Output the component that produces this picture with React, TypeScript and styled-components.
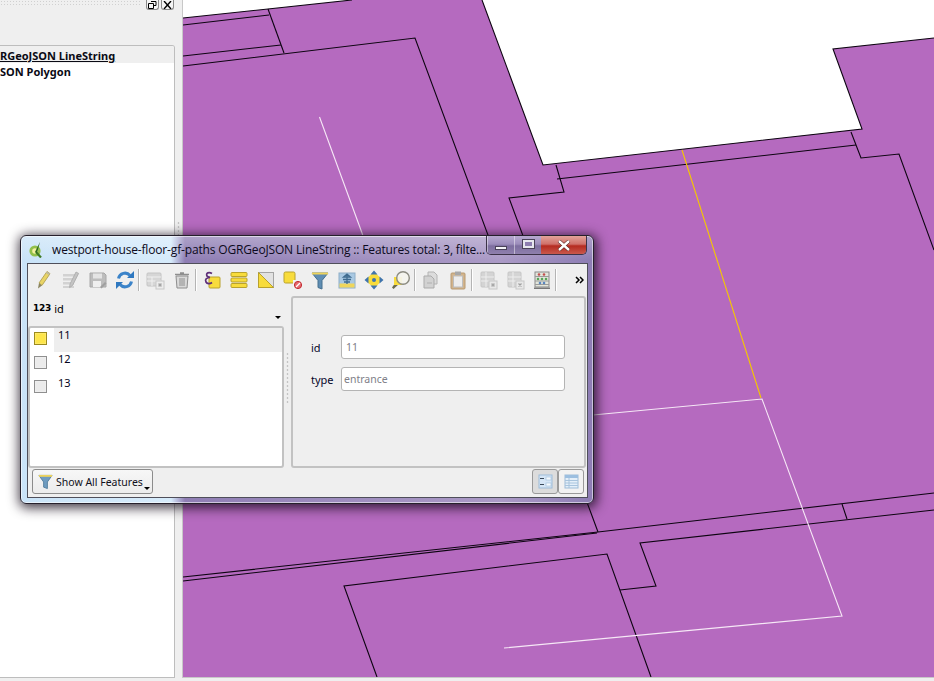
import React from 'react';
import styled, { createGlobalStyle } from 'styled-components';

const GlobalStyle = createGlobalStyle`
    html, body {
        margin: 0;
        padding: 0;
        background: #efefef;
    }
    body {
        font-family: "Noto Sans", "Open Sans", sans-serif;
        font-size: 11px;
        color: #000;
    }
`;

const Page = styled.div`
    position: relative;
    display: flex;
    width: 934px;
    height: 681px;
    overflow: hidden;
    background: #efefef;
`;

const Dock = styled.div`
    display: flex;
    flex-direction: column;
    width: 175px;
    height: 678px;
`;

const DockHeader = styled.div`
    display: flex;
    justify-content: flex-end;
    gap: 2px;
    height: 36px;
    padding-right: 1px;
    margin-bottom: 9px;
`;

const DockGrip = styled.div`
    flex: 1;
    height: 7px;
    margin-right: 2px;
    background-image: radial-gradient(#d0d0d0 0.8px, transparent 1px);
    background-size: 3px 3px;
`;

const DockButton = styled.button`
    display: flex;
    align-items: center;
    justify-content: center;
    width: 13px;
    height: 10px;
    padding: 0;
    border: 1px solid #8a8a8a;
    border-top: 0;
    border-radius: 0 0 3px 3px;
    background: #f4f4f4;
`;

const LayerList = styled.div`
    flex: 1;
    overflow: hidden;
    border: 1px solid #bdbdbd;
    border-left: 0;
    border-radius: 0 3px 0 0;
    background: #fff;
`;

const LayerRow = styled.div<{ $active?: boolean }>`
    height: ${(p) => (p.$active ? '15px' : '16px')};
    padding-top: ${(p) => (p.$active ? '2px' : '1px')};
    line-height: ${(p) => (p.$active ? '16px' : '15px')};
    white-space: nowrap;
    font-family: "Noto Sans", sans-serif;
    font-size: 11px;
    font-weight: 700;
    color: #0a0a14;
    background: ${(p) => (p.$active ? '#efefef' : '#fff')};
    text-decoration: ${(p) => (p.$active ? 'underline' : 'none')};
`;

const Splitter = styled.div`
    display: flex;
    flex-direction: column;
    align-items: center;
    width: 7px;
    height: 677px;
    padding-top: 221px;
    box-sizing: border-box;
`;

const SplitterGrip = styled.div<{ $h: number }>`
    width: 3px;
    height: ${(p) => p.$h}px;
    background-image: radial-gradient(#c4c4c4 0.9px, transparent 1.1px);
    background-size: 3px 4px;
`;

const MapFrame = styled.div`
    width: 752px;
    height: 678px;
    box-sizing: border-box;
    border-left: 1px solid #c8c8c8;
    border-bottom: 1px solid #c8c8c8;
    background: #fff;
    svg {
        display: block;
    }
`;

/* Floating window: its place on the desktop is the content */
const Window = styled.div`
    position: absolute;
    left: 20px;
    top: 235px;
    display: flex;
    flex-direction: column;
    width: 574px;
    height: 269px;
    box-sizing: border-box;
    border: 1px solid #26202c;
    border-radius: 6px;
    background:
        linear-gradient(180deg, rgba(255, 255, 255, 0.28) 0, rgba(255, 255, 255, 0) 24px),
        linear-gradient(90deg, #c9e3f8 0, #d6ebfb 150px, #8f7eb4 164px, #a08fc0 350px, #ab9ac6 480px, #8d7db4 100%);
    box-shadow:
        inset 0 0 0 1px rgba(255, 255, 255, 0.55),
        1px 2px 12px 2px rgba(20, 10, 25, 0.8);
`;

const TitleBar = styled.div`
    display: flex;
    align-items: flex-start;
    height: 27px;
    padding-left: 8px;
    flex-shrink: 0;
`;

const TitleIcon = styled.div`
    width: 14px;
    height: 16px;
    margin-top: 6px;
`;

const TitleText = styled.div`
    flex: 1;
    margin: 5px 0 0 9px;
    font-family: "Open Sans", sans-serif;
    font-size: 12px;
    line-height: 17px;
    letter-spacing: -0.16px;
    white-space: nowrap;
    color: #0b0a20;
`;

const CaptionButtons = styled.div`
    display: flex;
    height: 18px;
    margin-right: 6px;
    border: 1px solid #3c3348;
    border-top: 0;
    border-radius: 0 0 5px 5px;
    overflow: hidden;
`;

const CaptionButton = styled.div<{ $close?: boolean }>`
    display: flex;
    align-items: center;
    justify-content: center;
    width: ${(p) => (p.$close ? '45px' : '26px')};
    border-left: ${(p) => (p.$close ? '0' : '1px solid rgba(255, 255, 255, 0.45)')};
    background: ${(p) =>
        p.$close
            ? 'linear-gradient(180deg, #e2a49a 0, #d0706a 45%, #b52b20 55%, #c9594c 100%)'
            : 'linear-gradient(180deg, #b7a9d0 0, #9c8dbb 45%, #7d6e9f 55%, #8f80ad 100%)'};
`;

const MinGlyph = styled.div`
    width: 10px;
    height: 2px;
    margin-top: 6px;
    border: 1px solid #4a4258;
    background: #f2f2f6;
`;

const MaxGlyph = styled.div`
    width: 7px;
    height: 4px;
    margin-top: -3px;
    border: 2px solid #e6e6ee;
    outline: 1px solid #4a4258;
    background: #8d7db0;
`;

const Client = styled.div`
    display: flex;
    flex-direction: column;
    flex: 1;
    margin: 0 5px 5px 6px;
    border: 1px solid #4f4f5a;
    background: #efefef;
`;

const Toolbar = styled.div`
    display: flex;
    align-items: center;
    flex-shrink: 0;
    height: 32px;
    padding-left: 2px;
    box-sizing: border-box;
`;

const ToolButton = styled.div`
    display: flex;
    align-items: center;
    justify-content: center;
    width: 27px;
    height: 22px;
    flex-shrink: 0;
`;

const ToolSeparator = styled.div`
    width: 1px;
    height: 22px;
    margin-right: 1px;
    border-right: 1px solid #fff;
    background: #b4b4b4;
    flex-shrink: 0;
`;

const Overflow = styled.div`
    display: flex;
    margin-left: 17px;
`;

const Body = styled.div`
    display: flex;
    height: 172px;
    flex-shrink: 0;
`;

const FeaturesColumn = styled.div`
    display: flex;
    flex-direction: column;
    width: 256px;
`;

const FieldCombo = styled.div`
    position: relative;
    display: flex;
    align-items: flex-start;
    height: 30px;
    padding: 5px 0 0 5px;
    box-sizing: border-box;
`;

const FieldType = styled.span`
    font-family: "DejaVu Sans", sans-serif;
    font-size: 9px;
    font-weight: 700;
    line-height: 14px;
    letter-spacing: -0.2px;
`;

const FieldName = styled.span`
    margin-left: 3px;
    line-height: 15px;
`;

const ComboArrow = styled.div`
    position: absolute;
    right: 3px;
    bottom: 7px;
    width: 0;
    height: 0;
    border-left: 3px solid transparent;
    border-right: 3px solid transparent;
    border-top: 3px solid #000;
`;

const FeatureList = styled.div`
    flex: 1;
    border: 2px solid #c2c2c2;
    border-radius: 3px;
    background: #fff;
`;

const FeatureRow = styled.div`
    display: flex;
    height: 24px;
`;

const SwatchCell = styled.div`
    width: 24px;
    padding: 4px 0 0 4px;
    box-sizing: border-box;
`;

const Swatch = styled.div<{ $selected?: boolean }>`
    width: 11px;
    height: 11px;
    border: 1px solid ${(p) => (p.$selected ? '#9c8a1e' : '#8f8f8f')};
    box-shadow: inset 0 0 0 0.5px rgba(255, 255, 255, 0.3);
    background: ${(p) => (p.$selected ? '#fde54a' : '#ebebeb')};
`;

const FeatureLabel = styled.div<{ $active?: boolean }>`
    flex: 1;
    padding-left: 4px;
    line-height: 13px;
    color: #04041c;
    background: ${(p) => (p.$active ? '#eeeeee' : '#fff')};
`;

const MiddleGrip = styled.div`
    display: flex;
    justify-content: center;
    width: 7px;
    padding-top: 56px;
    box-sizing: border-box;
`;

const FormPanel = styled.div`
    flex: 1;
    margin-right: 1px;
    padding: 37px 19px 0 18px;
    box-sizing: border-box;
    border: 2px solid #c2c2c2;
    border-radius: 3px;
    display: grid;
    grid-template-columns: 30px 1fr;
    grid-auto-rows: 24px;
    row-gap: 8px;
    align-items: center;
`;

const FieldLabel = styled.label`
    color: #06062a;
    font-size: 11px;
`;

const FieldInput = styled.div<{ $inset?: number }>`
    height: 24px;
    box-sizing: border-box;
    padding-left: ${(p) => p.$inset ?? 2}px;
    border: 1px solid #b4b4b4;
    border-radius: 3px;
    background: #fff;
    line-height: 23px;
    color: #808088;
    font-size: 10.5px;
`;

const Footer = styled.div`
    display: flex;
    justify-content: space-between;
    padding: 1px 3px 0 4px;
`;

const ShowAllButton = styled.button`
    position: relative;
    display: flex;
    align-items: center;
    gap: 3px;
    width: 121px;
    height: 25px;
    padding: 0 0 0 5px;
    border: 1px solid #8c8c8c;
    border-radius: 3px;
    background: linear-gradient(180deg, #f7f7f7, #ececec);
    font-family: inherit;
    font-size: 10.5px;
    color: #101020;
`;

const ButtonArrow = styled.span`
    position: absolute;
    right: 2px;
    bottom: 3px;
    width: 0;
    height: 0;
    border-left: 3px solid transparent;
    border-right: 3px solid transparent;
    border-top: 3px solid #000;
`;

const ViewButtons = styled.div`
    display: flex;
`;

const ViewButton = styled.div<{ $checked?: boolean }>`
    display: flex;
    align-items: center;
    justify-content: center;
    width: 26px;
    height: 25px;
    box-sizing: border-box;
    border: 1px solid #9a9a9a;
    border-radius: 3px;
    background: ${(p) => (p.$checked ? '#dcdcdc' : '#f2f2f2')};
`;

const Svg = ({ children, size = 20 }: { children: React.ReactNode; size?: number }) => (
    <svg width={size} height={size} viewBox="0 0 20 20">{children}</svg>
);

const GreyTable = ({ badge }: { badge: 'star' | 'x' }) => (
    <Svg>
        <rect x="3" y="2" width="13" height="15" rx="1" fill="#d4d4d4" stroke="#c6c6c6" />
        <path d="M3 7h13M3 11h13M8 2v15" stroke="#eee" fill="none" />
        <rect x="11" y="11" width="8" height="8" fill="#e8e8e8" stroke="#c8c8c8" />
        {badge === 'star'
            ? <path d="M15 13v4M13 15h4M13.6 13.6l2.8 2.8M16.4 13.6l-2.8 2.8" stroke="#a8a8a8" />
            : <path d="M13.5 13.5l3 3M16.5 13.5l-3 3" stroke="#a0a0a0" strokeWidth="1.2" />}
    </Svg>
);

const tools: (React.ReactNode | 'sep')[] = [
    <Svg key="pencil">
        <path d="M5 13L13 1.5l3 2.2L8 15.4z" fill="#e9d465" stroke="#b7a75a" />
        <path d="M13 1.5l3 2.2-1 1.4-3-2.2z" fill="#bcb9a4" />
        <path d="M5 13l3 2.4-4 3z" fill="#8a8460" />
    </Svg>,
    <Svg key="multi-edit">
        <path d="M2 4h13v2.5H2zM2 8h12v2.5H2zM2 12h11v2.5H2zM2 16h11v2H2z" fill="#d2d2d2" />
        <path d="M9 14l6-12 2.6 1.4-6 12-3 2.2z" fill="#c4c4c4" stroke="#a8a8a8" strokeWidth="0.8" />
    </Svg>,
    <Svg key="save">
        <path d="M2 3h14l2 2v12H2z" fill="#bdbdbd" stroke="#a8a8a8" />
        <rect x="5" y="3.5" width="9" height="5" fill="#e4e4e4" />
        <rect x="5" y="11" width="8" height="6" fill="#efefef" />
        <path d="M12 17l5-5 1.5 1.5-5 5z" fill="#a0a0a0" />
    </Svg>,
    <Svg key="refresh">
        <path d="M3.5 8.5A6.6 6.6 0 0 1 15 5.5" fill="none" stroke="#3b83c9" strokeWidth="3" />
        <path d="M12 8h7V1z" fill="#2f78c0" />
        <path d="M16.5 11.5A6.6 6.6 0 0 1 5 14.5" fill="none" stroke="#3b83c9" strokeWidth="3" />
        <path d="M8 12H1v7z" fill="#2f78c0" />
    </Svg>,
    'sep',
    <Svg key="new-attr">
        <rect x="2" y="3" width="14" height="13" rx="1" fill="#d6d6d6" stroke="#c4c4c4" />
        <path d="M2 7h14M2 11h14M7 7v9" stroke="#f0f0f0" fill="none" />
        <rect x="11" y="11" width="8" height="8" fill="#ececec" stroke="#c8c8c8" />
        <path d="M15 13v4M13 15h4M13.6 13.6l2.8 2.8M16.4 13.6l-2.8 2.8" stroke="#a4a4a4" />
    </Svg>,
    <Svg key="trash">
        <path d="M4 6h12l-1 12H5z" fill="#d9d9d9" stroke="#8e8e8e" />
        <path d="M3 4.5h14M8 3h4" stroke="#8e8e8e" strokeWidth="1.6" fill="none" />
        <path d="M8 8v8M10 8v8M12 8v8" stroke="#8e8e8e" fill="none" />
    </Svg>,
    'sep',
    <Svg key="expression">
        <rect x="7" y="7" width="11" height="11" rx="1" fill="#f8dc3c" stroke="#b9a22c" />
        <path d="M10 3.5C7 1.5 3.5 3 5 6c.4.8 1.5 1.2 3 1.3C5 7.5 2.5 9 4 12c1 2 4 2 6 .5" fill="none" stroke="#5e2f78" strokeWidth="1.7" />
    </Svg>,
    <Svg key="select-all">
        <rect x="2" y="2.5" width="16" height="4" rx="1" fill="#f8dc3c" stroke="#b9a22c" />
        <rect x="2" y="8" width="16" height="4" rx="1" fill="#f8dc3c" stroke="#b9a22c" />
        <rect x="2" y="13.5" width="16" height="4" rx="1" fill="#f8dc3c" stroke="#b9a22c" />
    </Svg>,
    <Svg key="invert">
        <rect x="2.5" y="2.5" width="15" height="15" fill="#e2e2e2" stroke="#a4a4a4" />
        <path d="M2.5 2.5v15h15z" fill="#f8dc3c" stroke="#b9a22c" />
    </Svg>,
    <Svg key="deselect">
        <rect x="1" y="2" width="11" height="11" rx="1.5" fill="#f8dc3c" stroke="#b9a22c" />
        <rect x="10" y="10" width="9" height="9" fill="#f3f3f3" />
        <circle cx="15" cy="15" r="3.6" fill="#e86a70" stroke="#c02a30" />
        <path d="M13 17l4-4" stroke="#fff" strokeWidth="1.2" />
    </Svg>,
    <Svg key="filter">
        <path d="M2 3h16l-6 7.5V19l-4-1.5v-7z" fill="#5f8db3" stroke="#46708f" />
        <path d="M2 2.5h16v2H2z" fill="#eed35a" />
    </Svg>,
    <Svg key="move-top">
        <rect x="2" y="3" width="16" height="15" fill="#a9c9e3" stroke="#8eaec8" />
        <rect x="2.5" y="13.5" width="15" height="4" fill="#f0d65a" />
        <path d="M10 4v10M6.5 7h7L10 4zM6 9.5h8M7 12h6" stroke="#3f6c90" strokeWidth="1.3" fill="none" />
    </Svg>,
    <Svg key="pan-selected">
        <rect x="4" y="4" width="12" height="12" rx="1" fill="#f8dc3c" transform="rotate(45 10 10)" />
        <path d="M10 .5l3.5 4h-7zM10 19.5l3.5-4h-7zM.5 10l4-3.5v7zM19.5 10l-4-3.5v7z" fill="#3f74ad" />
        <circle cx="10" cy="10" r="2" fill="#3f74ad" />
    </Svg>,
    <Svg key="zoom-selected">
        <path d="M5 12l-4 5.5 1.5 1.5L8 14z" fill="#6a6a50" />
        <rect x="3" y="7" width="8" height="8" fill="#f8dc3c" />
        <circle cx="12" cy="8" r="6.3" fill="#f4f4ee" fillOpacity="0.92" stroke="#8b8b80" strokeWidth="1.4" />
    </Svg>,
    'sep',
    <Svg key="copy">
        <path d="M7 2h6l3 3v9H7z" fill="#dcdcdc" stroke="#b4b4b4" />
        <path d="M3 6h7l3 3v9H3z" fill="#d2d2d2" stroke="#ababab" />
        <path d="M6 13h5" stroke="#b0b0b0" />
    </Svg>,
    <Svg key="paste">
        <rect x="3" y="3" width="14" height="16" rx="1" fill="#d2b48c" stroke="#b89a72" />
        <rect x="5.5" y="6" width="9" height="11" fill="#ececec" stroke="#bdbdbd" />
        <rect x="7" y="1.5" width="6" height="3.5" fill="#a8a8a8" />
    </Svg>,
    'sep',
    <GreyTable key="new-col" badge="star" />,
    <GreyTable key="del-col" badge="x" />,
    <Svg key="field-calc">
        <path d="M2 17.5h16v1.5H2z" fill="#777" />
        <rect x="3" y="2" width="14" height="15" fill="#e3e6dc" stroke="#8a8a8a" />
        <path d="M3 6.5h14M3 11h14M3 14.5h14" stroke="#9a9a9a" fill="none" />
        <circle cx="7" cy="4.5" r="1.3" fill="#c44e4e" />
        <circle cx="12" cy="4.5" r="1.3" fill="#c44e4e" />
        <circle cx="6" cy="9" r="1.3" fill="#58a458" />
        <circle cx="10" cy="9" r="1.3" fill="#58a458" />
        <circle cx="14" cy="9" r="1.3" fill="#58a458" />
        <circle cx="8" cy="13" r="1.3" fill="#5b87c0" />
        <circle cx="12" cy="13" r="1.3" fill="#5b87c0" />
    </Svg>,
    'sep',
];

const MapView = () => {
    const black = [
        '183,18 352,0',
        '183,25 269,15',
        '268,9 284,53',
        '183,56 281,45',
        '183,66 415,38 598,532',
        '482,0 543,165 862,129 833,49 934,38',
        '557,179 856,145',
        '556,165 564,192 509,198 580,390',
        '851,132 861,158 899,154 934,250',
        '183,577 598,532 934,493',
        '183,581 597,533',
        '934,510 640,543 656,586 620,590',
        '842,504 847,519',
        '377,677 344,586 607,554 651,677',
    ];
    return (
        <svg width={751} height={677} viewBox="183 0 751 677">
            <rect x="183" y="0" width="751" height="677" fill="#b56abf" />
            <polygon points="482,0 543,165 862,129 833,49 934,38 934,0" fill="#fff" />
            <polygon points="183,0 352,0 183,18" fill="#fff" />
            <g fill="none" stroke="#0c0410" strokeWidth="1.1">
                {black.map((points) => <polyline key={points} points={points} />)}
            </g>
            <g fill="none" stroke="#f6e8f6" strokeWidth="1.1">
                <polyline points="319.5,117 362,233 400,340" />
                <polyline points="540,420 762,399 842,616 504,648" />
            </g>
            <line x1="682" y1="150" x2="761" y2="398" stroke="#f5c800" strokeWidth="1.1" />
        </svg>
    );
};

export default function App() {
    return (
        <Page>
            <GlobalStyle />
            <Dock>
                <DockHeader>
                    <DockGrip />
                    <DockButton>
                        <svg width="9" height="8" viewBox="0 0 9 8">
                            <path d="M3 .5h5v4H6M.5 2.5h5v5h-5z" fill="none" stroke="#000" />
                        </svg>
                    </DockButton>
                    <DockButton>
                        <svg width="9" height="8" viewBox="0 0 9 8">
                            <path d="M1 0l7 8M8 0L1 8" stroke="#000" strokeWidth="1.4" />
                        </svg>
                    </DockButton>
                </DockHeader>
                <LayerList>
                    <LayerRow $active>RGeoJSON LineString</LayerRow>
                    <LayerRow>SON Polygon</LayerRow>
                </LayerList>
            </Dock>
            <Splitter>
                <SplitterGrip $h={14} />
            </Splitter>
            <MapFrame>
                <MapView />
            </MapFrame>

            <Window>
                <TitleBar>
                    <TitleIcon>
                        <svg width="14" height="16" viewBox="0 0 14 16">
                            <circle cx="6" cy="9" r="4.2" fill="#f4f0a0" stroke="#93c04a" strokeWidth="2.8" />
                            <path d="M7 10l5 5.5" stroke="#3f7a24" strokeWidth="2.2" />
                            <path d="M11 0L6 10l2 1z" fill="#2f6a1e" />
                        </svg>
                    </TitleIcon>
                    <TitleText>westport-house-floor-gf-paths OGRGeoJSON LineString :: Features total: 3, filte...</TitleText>
                    <CaptionButtons>
                        <CaptionButton><MinGlyph /></CaptionButton>
                        <CaptionButton><MaxGlyph /></CaptionButton>
                        <CaptionButton $close>
                            <svg width="14" height="11" viewBox="0 0 14 11">
                                <path d="M2 1l10 9M12 1L2 10" stroke="#4a1a18" strokeWidth="3.6" />
                                <path d="M2 1l10 9M12 1L2 10" stroke="#fff" strokeWidth="2.4" />
                            </svg>
                        </CaptionButton>
                    </CaptionButtons>
                </TitleBar>
                <Client>
                    <Toolbar>
                        {tools.map((tool, index) =>
                            tool === 'sep'
                                ? <ToolSeparator key={index} />
                                : <ToolButton key={index}>{tool}</ToolButton>
                        )}
                        <Overflow>
                            <svg width="9" height="8" viewBox="0 0 9 8">
                                <path d="M1 1l3 3-3 3M5 1l3 3-3 3" fill="none" stroke="#000" strokeWidth="1.5" />
                            </svg>
                        </Overflow>
                    </Toolbar>
                    <Body>
                        <FeaturesColumn>
                            <FieldCombo>
                                <FieldType>123</FieldType>
                                <FieldName>id</FieldName>
                                <ComboArrow />
                            </FieldCombo>
                            <FeatureList>
                                <FeatureRow>
                                    <SwatchCell><Swatch $selected /></SwatchCell>
                                    <FeatureLabel $active>11</FeatureLabel>
                                </FeatureRow>
                                <FeatureRow>
                                    <SwatchCell><Swatch /></SwatchCell>
                                    <FeatureLabel>12</FeatureLabel>
                                </FeatureRow>
                                <FeatureRow>
                                    <SwatchCell><Swatch /></SwatchCell>
                                    <FeatureLabel>13</FeatureLabel>
                                </FeatureRow>
                            </FeatureList>
                        </FeaturesColumn>
                        <MiddleGrip>
                            <SplitterGrip $h={52} />
                        </MiddleGrip>
                        <FormPanel>
                            <FieldLabel>id</FieldLabel>
                            <FieldInput $inset={4}>11</FieldInput>
                            <FieldLabel>type</FieldLabel>
                            <FieldInput>entrance</FieldInput>
                        </FormPanel>
                    </Body>
                    <Footer>
                        <ShowAllButton>
                            <svg width="15" height="17" viewBox="0 0 16 17">
                                <path d="M1 2h14l-5 7v7l-4-1.5V9z" fill="#6f9cc0" stroke="#55809f" />
                                <path d="M1 1.5h14v2H1z" fill="#eed35a" />
                            </svg>
                            Show All Features
                            <ButtonArrow />
                        </ShowAllButton>
                        <ViewButtons>
                            <ViewButton $checked>
                                <svg width="15" height="15" viewBox="0 0 15 15">
                                    <rect x="1" y="1" width="13" height="13" fill="#d6e6f6" stroke="#9dbcd8" />
                                    <path d="M2 4.5h4M2 10.5h4" stroke="#3a4a5a" />
                                    <rect x="8" y="3" width="5" height="3" fill="#f5fafe" stroke="#9dbcd8" strokeWidth="0.6" />
                                    <rect x="8" y="9" width="5" height="3" fill="#f5fafe" stroke="#9dbcd8" strokeWidth="0.6" />
                                </svg>
                            </ViewButton>
                            <ViewButton>
                                <svg width="15" height="15" viewBox="0 0 15 15">
                                    <rect x="1" y="1" width="13" height="13" fill="#e4eff9" stroke="#9dbcd8" />
                                    <rect x="1" y="1" width="13" height="3" fill="#9cbfe0" />
                                    <path d="M1 6.5h13M1 9h13M1 11.5h13M5 4v10" stroke="#a8c4dd" fill="none" />
                                </svg>
                            </ViewButton>
                        </ViewButtons>
                    </Footer>
                </Client>
            </Window>
        </Page>
    );
}
